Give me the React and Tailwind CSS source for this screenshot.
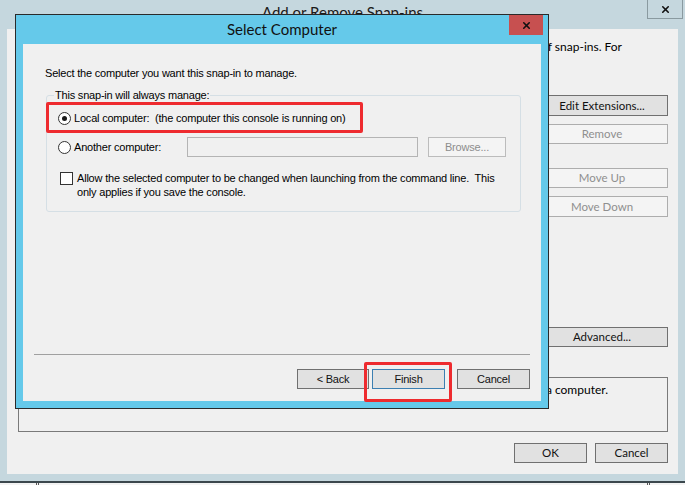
import { X } from 'lucide-react'

const sans = "font-['Liberation_Sans',Arial,sans-serif]"
const ui = "font-['Lato','Open_Sans',sans-serif]"

function Radio({ checked }) {
  return (
    <span className="w-[13px] h-[13px] rounded-full border border-[#333] bg-white flex items-center justify-center shrink-0">
      {checked && <span className="w-[5px] h-[5px] rounded-full bg-[#1a1a1a]" />}
    </span>
  )
}

function BgButton({ children, disabled, className = '' }) {
  return (
    <div
      className={`w-full flex items-center justify-center border text-[11.5px] ${ui} ${
        disabled
          ? 'bg-[#f4f4f4] border-[#adadad] text-[#8f8f8f]'
          : 'bg-[#e1e1e1] border-[#707070] text-[#111]'
      } ${className}`}
    >
      {children}
    </div>
  )
}

function DlgButton({ children, w = 'w-[73px]', primary }) {
  return (
    <div
      className={`${w} h-[20px] flex items-center justify-center bg-[#e1e1e1] border ${
        primary ? 'border-[#3c7fb1]' : 'border-[#707070]'
      } text-[11px] text-[#111]`}
    >
      {children}
    </div>
  )
}

export default function App() {
  return (
    <div className={`relative w-[685px] h-[485px] overflow-hidden bg-[#c5d7de] ${sans} text-[11px] text-black`}>

      {/* Add or Remove Snap-ins (behind) */}
      <div className="flex flex-col h-full">
        <div className="h-[29px] flex">
          <div className="w-[38px]" />
          <div className={`flex-1 text-center pt-[2px] text-[15px] leading-[20px] text-[#1a1a1a] ${ui}`}>
            Add or Remove Snap-ins
          </div>
          <div className="w-[36px] h-[19px] mr-[2px] border border-t-0 border-[#8a9aa0] flex items-center justify-center">
            <X size={11} strokeWidth={3.5} color="#111" />
          </div>
        </div>

        <div className="mx-[7px] h-[445px] bg-[#f0f0f0] flex flex-col">
          <div className={`pt-[10px] pr-[56px] text-right text-[12px] leading-[16px] whitespace-nowrap ${ui}`}>
            of snap-ins. For
          </div>

          <div className="flex mt-[40px]">
            <div className="flex-1" />
            <div className="w-[132px] mr-[10px] flex flex-col">
              <BgButton className="h-[21px]">Edit Extensions...</BgButton>
              <BgButton disabled className="h-[20px] mt-[8px]">Remove</BgButton>
              <BgButton disabled className="h-[20px] mt-[24px]">Move Up</BgButton>
              <BgButton disabled className="h-[21px] mt-[8px]">Move Down</BgButton>
              <BgButton className="h-[20px] mt-[110px]">Advanced...</BgButton>
            </div>
          </div>

          <div className={`ml-[11px] mr-[10px] mt-[30px] h-[55px] border border-[#7a7a7a] pr-[59px] pt-[3px] text-right text-[12px] ${ui}`}>
            a computer.
          </div>

          <div className="flex justify-end gap-[8px] mr-[10px] mt-[11px]">
            <BgButton className="!w-[73px] h-[20px]">OK</BgButton>
            <BgButton className="!w-[73px] h-[20px]">Cancel</BgButton>
          </div>
        </div>

        <div className="h-[7px]" />
        <div className="h-[2px] bg-[#3b474d]" />
        <div className="flex-1 bg-[#f3f3f3] flex">
          <div className="ml-[36px] w-[3px] border-x border-[#555]" />
          <div className="flex-1" />
          <div className="mr-[35px] w-[3px] border-x border-[#555]" />
        </div>
      </div>

      {/* Select Computer dialog */}
      <div className="absolute left-[15px] top-[14px] w-[534px] h-[395px] border border-[#2a2a2a] bg-[#65c9ea] flex flex-col">
        <div className="h-[29px] flex shrink-0">
          <div className="w-[39px]" />
          <div className={`flex-1 text-center text-[15px] leading-[29px] text-[#111] ${ui}`}>
            Select Computer
          </div>
          <div className="w-[34px] h-[20px] mr-[5px] bg-[#c75050] flex items-center justify-center">
            <X size={11} strokeWidth={3.5} color="#111" />
          </div>
        </div>

        <div className="mx-[7px] mb-[7px] flex-1 bg-[#f0f0f0] flex flex-col tracking-[-0.2px]">
          <div className="pl-[22px] pt-[23px] leading-[13px]">
            Select the computer you want this snap-in to manage.
          </div>

          <div className="relative ml-[23px] mt-[15px] w-[475px] h-[117px] border border-[#d5dfe5] rounded-[3px] pl-[11px]">
            <span className="absolute -top-[7px] left-[7px] px-[1px] bg-[#f0f0f0] leading-[13px]">
              This snap-in will always manage:
            </span>

            <div className="flex items-center gap-[3px] mt-[15px] h-[14px]">
              <Radio checked />
              <span>Local computer:&nbsp; (the computer this console is running on)</span>
            </div>

            <div className="flex items-center mt-[12px] h-[20px]">
              <Radio />
              <span className="ml-[3px] w-[113px]">Another computer:</span>
              <div className="w-[231px] h-[20px] border border-[#b4b4b4] bg-[#f0f0f0]" />
              <div className="ml-[10px] w-[78px] h-[20px] border border-[#bcbcbc] bg-[#f4f4f4] text-[#8d8d8d] flex items-center justify-center">
                Browse...
              </div>
            </div>

            <div className="flex items-start gap-[4px] ml-[2px] mt-[14px] leading-[14px]">
              <span className="w-[13px] h-[13px] mt-[1px] border border-[#333] bg-white shrink-0" />
              <span>
                Allow the selected computer to be changed when launching from the command line.&nbsp; This
                <br />
                only applies if you save the console.
              </span>
            </div>
          </div>

          <div className="mt-auto mx-[11px] h-px bg-[#a0a0a0]" />
          <div className="flex justify-end mr-[11px] mt-[14px] mb-[12px]">
            <DlgButton w="w-[72px]">&lt; Back</DlgButton>
            <div className="ml-[3px]"><DlgButton primary>Finish</DlgButton></div>
            <div className="ml-[12px]"><DlgButton>Cancel</DlgButton></div>
          </div>
        </div>
      </div>

      {/* red annotation boxes */}
      <div className="absolute left-[46px] top-[102px] w-[317px] h-[31px] border-[3px] border-[#ee2b2f] rounded-[2px]" />
      <div className="absolute left-[364px] top-[362px] w-[88px] h-[40px] border-[3px] border-[#ee2b2f] rounded-[2px]" />
    </div>
  )
}
